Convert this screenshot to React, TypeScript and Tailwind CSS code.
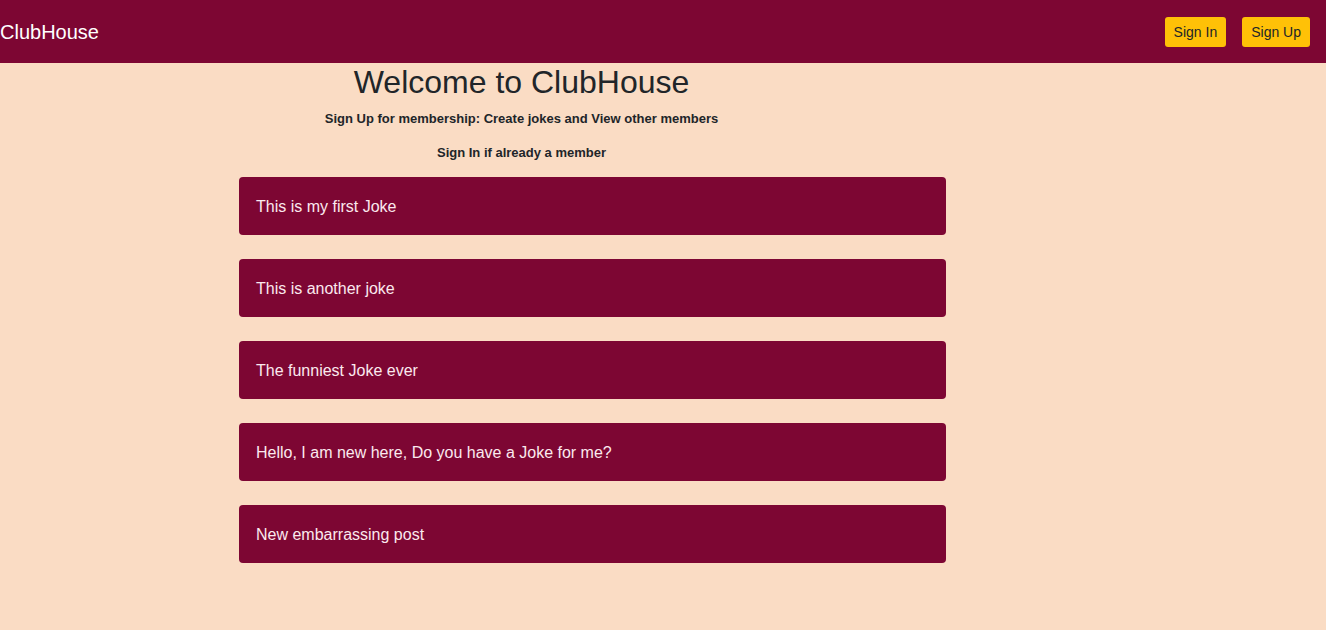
const jokes = [
  "This is my first Joke",
  "This is another joke",
  "The funniest Joke ever",
  "Hello, I am new here, Do you have a Joke for me?",
  "New embarrassing post",
];

export default function App() {
  return (
    <div className="min-h-[630px] bg-[#fadcc4] font-['Liberation_Sans',Arial,sans-serif] text-[#212529]">
      {/* top bar */}
      <header className="flex h-[63px] items-center justify-between bg-[#7d0633] pr-4">
        <span className="text-[20px] text-white">ClubHouse</span>
        <div className="flex items-center gap-4">
          <button className="h-[30px] rounded-[3px] bg-[#ffc107] px-[9px] pt-[2px] text-[14px] text-[#212529]">
            Sign In
          </button>
          <button className="h-[30px] rounded-[3px] bg-[#ffc107] px-[9px] pt-[2px] text-[14px] text-[#212529]">
            Sign Up
          </button>
        </div>
      </header>

      <main className="flex flex-col">
        <div className="flex w-[1043px] flex-col items-center">
          <h1 className="text-[32px] leading-[38px]">Welcome to ClubHouse</h1>
          <p className="mt-[10px] text-[13px] font-bold leading-[16px]">
            Sign Up for membership: Create jokes and View other members
          </p>
          <p className="mt-[18px] text-[13px] font-bold leading-[16px]">Sign In if already a member</p>
        </div>

        <div className="ml-[239px] mt-[16px] flex w-[707px] flex-col gap-6">
          {jokes.map((j) => (
            <div
              key={j}
              className="flex h-[58px] items-center rounded-[4px] bg-[#7d0633] px-[17px] pt-[2px] text-[16px] text-[#fbe9ee]"
            >
              {j}
            </div>
          ))}
        </div>
      </main>
    </div>
  );
}
